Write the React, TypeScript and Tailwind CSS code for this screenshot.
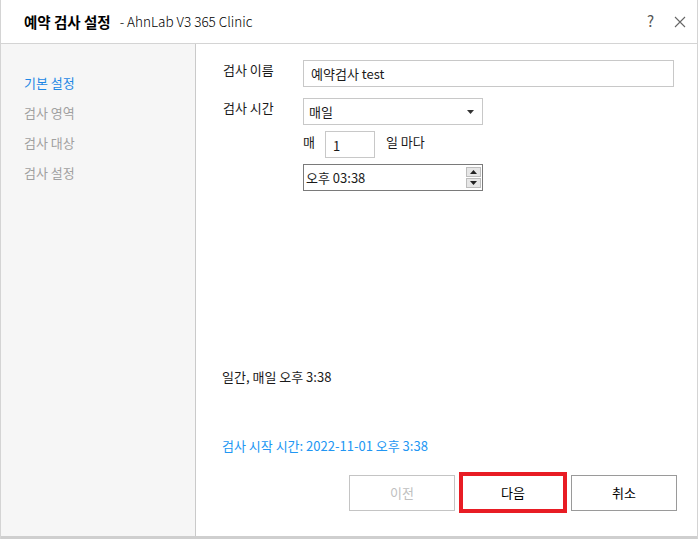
import React from 'react';

const font = { fontFamily: '"Noto Sans CJK KR", "Noto Sans", sans-serif' };

export default function App() {
    const menu = [
        { label: "기본 설정", active: true },
        { label: "검사 영역", active: false },
        { label: "검사 대상", active: false },
        { label: "검사 설정", active: false },
    ];

    return (
        <div
            className="w-[698px] h-[539px] flex flex-col bg-white border-l border-r border-[#d4d4d4] text-[13px] text-[#1a1a1a]"
            style={font}
        >
            {/* Title bar */}
            <div className="h-[44px] shrink-0 flex items-center border-b border-[#d4d4d4] pl-[23px] pr-[11px]">
                <span className="font-bold text-[14.5px] text-black">예약 검사 설정</span>
                <span className="ml-[9px] text-[13.5px] font-light text-black">- AhnLab V3 365 Clinic</span>
                <div className="ml-auto flex items-center gap-[20px] text-[#555]">
                    <span className="text-[15px]">?</span>
                    <svg width="12" height="12" viewBox="0 0 12 12">
                        <path d="M1 1 L11 11 M11 1 L1 11" stroke="#666" strokeWidth="1.1" />
                    </svg>
                </div>
            </div>

            {/* Body */}
            <div className="flex-1 flex border-b-[3px] border-[#cfcfcf]">
                {/* Sidebar */}
                <div className="w-[195px] shrink-0 bg-[#f6f6f6] border-r border-[#cacaca] pt-[30px] pl-[23px] flex flex-col gap-[12px]">
                    {menu.map(item => (
                        <div
                            key={item.label}
                            className={`h-[18px] leading-[18px] ${item.active ? 'text-[#1e88e5]' : 'text-[#a0a0a0]'}`}
                        >
                            {item.label}
                        </div>
                    ))}
                </div>

                {/* Main */}
                <div className="flex-1 flex flex-col pl-[27px] pr-[20px] pt-[16px]">
                    <div className="flex items-start">
                        <div className="w-[80px] pt-[1px] leading-[18px]">검사 이름</div>
                        <div className="w-[371px] h-[27px] border border-[#c8c8c8] flex items-center pl-[7px]">예약검사 test</div>
                    </div>
                    <div className="flex items-start mt-[11px]">
                        <div className="w-[80px] pt-[1px] leading-[18px]">검사 시간</div>
                        <div className="w-[180px] h-[27px] border border-[#c8c8c8] flex items-center pl-[5px] pr-[8px]">
                            <span>매일</span>
                            <svg width="7" height="4" viewBox="0 0 7 4" className="ml-auto">
                                <path d="M0 0 L7 0 L3.5 4 Z" fill="#333" />
                            </svg>
                        </div>
                    </div>
                    <div className="flex items-center mt-[6px] ml-[80px]">
                        <span className="w-[22px] -mt-[6px]">매</span>
                        <div className="w-[50px] h-[27px] border border-[#c8c8c8] flex items-center pl-[7px] pt-[3px]">1</div>
                        <span className="ml-[11px] -mt-[6px]">일 마다</span>
                    </div>
                    <div className="mt-[6px] ml-[80px] w-[180px] h-[27px] border border-[#7a7a7a] flex items-center pl-[2px] pr-[1px]">
                        <span>오후 03:38</span>
                        <div className="ml-auto flex flex-col gap-[1px]">
                            <div className="w-[15px] h-[10px] bg-[#e6e6e6] border border-[#bdbdbd] flex items-center justify-center">
                                <svg width="7" height="4" viewBox="0 0 7 4"><path d="M0 4 L7 4 L3.5 0 Z" fill="#222" /></svg>
                            </div>
                            <div className="w-[15px] h-[10px] bg-[#e6e6e6] border border-[#bdbdbd] flex items-center justify-center">
                                <svg width="7" height="4" viewBox="0 0 7 4"><path d="M0 0 L7 0 L3.5 4 Z" fill="#222" /></svg>
                            </div>
                        </div>
                    </div>

                    <div className="mt-[177px] -ml-[1px] leading-[18px]">일간, 매일 오후 3:38</div>
                    <div className="mt-[51px] -ml-[1px] leading-[18px] text-[#2196f3]">검사 시작 시간: 2022-11-01 오후 3:38</div>

                    <div className="mt-[17px] flex items-center justify-end gap-[4px]">
                        <button className="w-[106px] h-[36px] border border-[#c4c4c4] text-[#c0c0c0] bg-white">이전</button>
                        <button className="w-[108px] h-[41px] border-[4px] border-[#e81c24] bg-white text-black">다음</button>
                        <button className="w-[106px] h-[36px] border border-[#9a9a9a] bg-white text-black">취소</button>
                    </div>
                </div>
            </div>
        </div>
    );
}
